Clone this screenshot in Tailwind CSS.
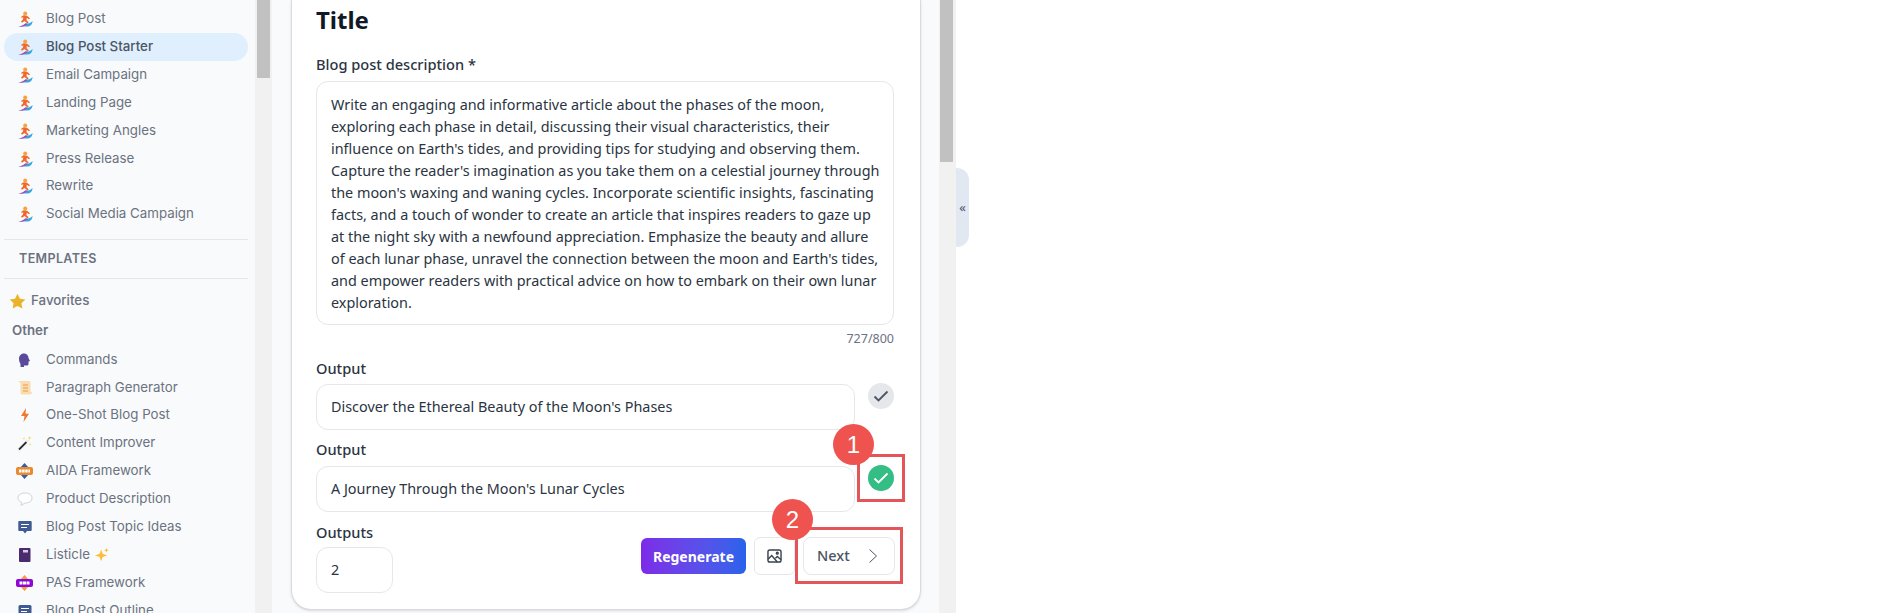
<!doctype html>
<html>
<head>
<meta charset="UTF-8">
<script src="https://cdn.jsdelivr.net/npm/@tailwindcss/browser@4"></script>
<title>Blog Post Starter</title>
</head>
<body class="bg-white overflow-hidden">
<svg class="hidden">
  <symbol id="surfer" viewBox="0 0 16 16">
    <path d="M1.500 15.500c3.500-.3 5.500-1.300 7.500-3 2 .3 4.500-.3 6.500-2.500 0 3.500-2 5.500-6 5.500z" fill="#39a6e0"/>
    <path d="M1 15.700c3-.4 5.500-1.500 7.500-3.400l2 .6c-2 2-5 3-9.500 2.800z" fill="#a84cb8"/>
    <circle cx="8.200" cy="2.400" r="2" fill="#f9a13c"/>
    <path d="M6.500 4.300l3.500.4 3 2.600-1 1-2.200-1.500-.3 2.400 2.200 2-1.200 1.300L7.500 10 5 11.800l-1-1.200 2-2.200.2-2.300-1.200 1-1-1z" fill="#ef6a2a"/>
  </symbol>
</svg>
<div class="flex h-[613px] w-[1887px]">
  <!-- Sidebar -->
  <aside class="w-[255px] shrink-0 bg-[#f9fafb] overflow-hidden font-['Inter',sans-serif] text-[13.3px] text-[#6b7280]">
    <ul class="pl-[4px] pr-[7px] pt-[5px]">
      <li class="flex items-center h-[28px] pl-[13px]"><svg class="w-[16px] h-[16px] mr-[13px]"><use href="#surfer"/></svg>Blog Post</li>
      <li class="flex items-center h-[28px] pl-[13px] rounded-full bg-[#e0effe] font-medium text-[#4b5563]"><svg class="w-[16px] h-[16px] mr-[13px]"><use href="#surfer"/></svg>Blog Post Starter</li>
      <li class="flex items-center h-[28px] pl-[13px]"><svg class="w-[16px] h-[16px] mr-[13px]"><use href="#surfer"/></svg>Email Campaign</li>
      <li class="flex items-center h-[28px] pl-[13px]"><svg class="w-[16px] h-[16px] mr-[13px]"><use href="#surfer"/></svg>Landing Page</li>
      <li class="flex items-center h-[28px] pl-[13px]"><svg class="w-[16px] h-[16px] mr-[13px]"><use href="#surfer"/></svg>Marketing Angles</li>
      <li class="flex items-center h-[27px] pl-[13px]"><svg class="w-[16px] h-[16px] mr-[13px]"><use href="#surfer"/></svg>Press Release</li>
      <li class="flex items-center h-[28px] pl-[13px]"><svg class="w-[16px] h-[16px] mr-[13px]"><use href="#surfer"/></svg>Rewrite</li>
      <li class="flex items-center h-[28px] pl-[13px]"><svg class="w-[16px] h-[16px] mr-[13px]"><use href="#surfer"/></svg>Social Media Campaign</li>
    </ul>
    <div class="mt-[11px] ml-[4px] mr-[7px] h-[40px] border-y border-[#e5e7eb] flex items-center pl-[15px] font-semibold text-[12.5px] tracking-[0.03em] text-[#6b7280]">TEMPLATES</div>
    <div class="flex items-center h-[22px] mt-[11px] pl-[9px] font-medium text-[#6b7280]">
      <svg class="w-[17px] h-[17px] mr-[5px]" viewBox="0 0 24 24"><path d="M12 1l3.400 7 7.600 1.100-5.500 5.300 1.400 7.600L12 18.300 5.100 22l1.400-7.600L1 9.100 8.600 8z" fill="#e9b32a"/></svg>Favorites
    </div>
    <div class="h-[22px] mt-[8px] pl-[12px] flex items-center font-semibold text-[#6b7280]">Other</div>
    <ul class="pl-[4px] pr-[7px] mt-[4px]">
      <li class="flex items-center h-[28px] pl-[13px]"><svg class="w-[16px] h-[16px] mr-[13px]" viewBox="0 0 16 16"><path d="M2 6.500C2 3.500 4.500 1.500 7 1.500s4.500 2 4.500 4.500l1.500 3-1.500.5V12c0 1-1 1.500-2 1.500H7V15H3.500v-3C2.500 10.500 2 8.500 2 6.500z" fill="#5b4a9c"/></svg>Commands</li>
      <li class="flex items-center h-[27px] pl-[13px]"><svg class="w-[16px] h-[16px] mr-[13px]" viewBox="0 0 16 16"><path d="M1 1h11c1 0 1.500 1 1.500 2v9H15c0 1.500-1 2.500-2 2.500H5c-1 0-1.500-1-1.500-2V3C3.500 2 2 2 1 1z" fill="#fbdcae"/><path d="M6 5h5M6 8h5M6 11h5" stroke="#e59a4c"/></svg>Paragraph Generator</li>
      <li class="flex items-center h-[28px] pl-[13px]"><svg class="w-[16px] h-[16px] mr-[13px]" viewBox="0 0 16 16"><path d="M9 1L4 9h3.500L6.500 15 12 6.800H8.500z" fill="#f4762d"/></svg>One-Shot Blog Post</li>
      <li class="flex items-center h-[28px] pl-[13px]"><svg class="w-[16px] h-[16px] mr-[13px]" viewBox="0 0 16 16"><path d="M2 14.500L9.500 7" stroke="#292f33" stroke-width="1.800"/><path d="M9.500 7l2-2" stroke="#e8e8e8" stroke-width="1.800"/><path d="M12.500 1l.6 1.500 1.500.5-1.500.6-.6 1.400-.5-1.400-1.500-.6 1.500-.5zM7 2l.4 1 1 .4-1 .4L7 4.800 6.600 3.800l-1-.4 1-.4zM13 8l.4 1 1 .4-1 .4-.4 1-.4-1-1-.4 1-.4z" fill="#f8d566"/></svg>Content Improver</li>
      <li class="flex items-center h-[28px] pl-[12px]"><svg class="w-[17px] h-[16px] mr-[13px]" viewBox="0 0 17 16"><path d="M8.500 0l4.500 5H4z M4 11h9l-4.500 5z" fill="#3b5ba5"/><rect y="4" width="17" height="8" rx="2" fill="#ea8a2f"/><path d="M3 8h11" stroke="#fff" stroke-width="3" stroke-dasharray="2.500 .6"/></svg>AIDA Framework</li>
      <li class="flex items-center h-[28px] pl-[13px]"><svg class="w-[16px] h-[16px] mr-[13px]" viewBox="0 0 16 16"><path d="M8 2c4 0 7 1.800 7 5s-3 5-7 5l-4 2.500 1-3C2.500 10.500 1 9 1 7c0-3.200 3-5 7-5z" fill="#fff" stroke="#ccd6dd"/></svg>Product Description</li>
      <li class="flex items-center h-[28px] pl-[13px]"><svg class="w-[16px] h-[16px] mr-[13px]" viewBox="0 0 16 16"><path d="M2.500 2h11c.8 0 1.200.5 1.200 1.200v7.500c0 .8-.5 1.300-1.200 1.300H10l-2 2.500L6 12H2.500c-.8 0-1.200-.5-1.200-1.300V3.200C1.300 2.500 1.700 2 2.500 2z" fill="#3f5b94"/><path d="M4 5.500h8M4 8.500h6" stroke="#fff" stroke-width="1.200"/></svg>Blog Post Topic Ideas</li>
      <li class="flex items-center h-[28px] pl-[13px]"><svg class="w-[16px] h-[16px] mr-[13px]" viewBox="0 0 16 16"><rect x="2" y="1" width="11.500" height="14" rx="1" fill="#4a2c6e"/><rect x="6" y="3" width="5" height="2.500" fill="#d8c9e6"/></svg>Listicle <svg class="ml-[5px] w-[14px] h-[14px]" viewBox="0 0 16 16"><path d="M7 2l1.800 4.700L14 8.500l-5.200 1.800L7 15l-1.800-4.700L0 8.500l5.200-1.800zM13 0l.8 1.700 1.700.8-1.700.8-.8 1.700-.8-1.700-1.700-.8 1.700-.8z" fill="#fbbf3c"/></svg></li>
      <li class="flex items-center h-[28px] pl-[12px]"><svg class="w-[17px] h-[16px] mr-[13px]" viewBox="0 0 17 16"><path d="M8.500 0l4.500 5H4z M4 11h9l-4.500 5z" fill="#f59e3c"/><rect y="4" width="17" height="8" rx="2" fill="#8f06d6"/><path d="M3.500 8h10" stroke="#fff" stroke-width="3" stroke-dasharray="3 .5"/></svg>PAS Framework</li>
      <li class="flex items-center h-[28px] pl-[13px]"><svg class="w-[16px] h-[16px] mr-[13px]" viewBox="0 0 16 16"><rect x="1.500" y="2" width="13" height="13" rx="1.500" fill="#3f5b94"/><path d="M4 5.500h8M4 8.500h6" stroke="#fff" stroke-width="1.200"/></svg>Blog Post Outline</li>
    </ul>
  </aside>
  <!-- Sidebar scrollbar -->
  <div class="w-[17px] shrink-0 bg-[#f1f1f1] pl-[2px]"><div class="w-[13px] h-[78px] bg-[#c1c1c1]"></div></div>
  <!-- Main -->
  <main class="relative w-[667px] shrink-0 bg-[#f9fafb] pl-[19px] font-['Noto_Sans',sans-serif] overflow-hidden">
    <section class="w-[630px] h-[610px] bg-white rounded-b-[20px] border-x border-b border-[#d9dbde] shadow-sm pl-[24px]">
      <h1 class="pt-[2px] h-[40px] text-[24px] leading-[36px] font-bold text-[#111827]">Title</h1>
      <label class="block mt-[14px] text-[14.6px] leading-[20px] font-medium text-[#2b3442]">Blog post description *</label>
      <div class="mt-[7px] w-[578px] h-[244px] border border-[#e5e7eb] rounded-xl pl-[14px] pt-[12px] text-[14.4px] leading-[22px] whitespace-nowrap text-[#2b3442]">Write an engaging and informative article about the phases of the moon,<br>exploring each phase in detail, discussing their visual characteristics, their<br>influence on Earth's tides, and providing tips for studying and observing them.<br>Capture the reader's imagination as you take them on a celestial journey through<br>the moon's waxing and waning cycles. Incorporate scientific insights, fascinating<br>facts, and a touch of wonder to create an article that inspires readers to gaze up<br>at the night sky with a newfound appreciation. Emphasize the beauty and allure<br>of each lunar phase, unravel the connection between the moon and Earth's tides,<br>and empower readers with practical advice on how to embark on their own lunar<br>exploration.</div>
      <div class="mt-[6px] w-[578px] text-right text-[12.5px] leading-[16px] text-[#6b7280]">727/800</div>
      <div class="mt-[11px] text-[14.6px] leading-[20px] font-medium text-[#2b3442]">Output</div>
      <div class="mt-[6px] flex items-start">
        <div class="w-[539px] h-[46px] border border-[#e5e7eb] rounded-xl pl-[14px] flex items-center text-[14.4px] text-[#2b3442]">Discover the Ethereal Beauty of the Moon's Phases</div>
        <div class="ml-[13px] mt-[-1px] w-[26px] h-[26px] rounded-full bg-[#e5e7eb] flex items-center justify-center"><svg class="w-[16px] h-[16px]" viewBox="0 0 16 16" fill="none" stroke="#4b5563" stroke-width="1.800"><path d="M1.500 8.500l4 4 9-9"/></svg></div>
      </div>
      <div class="mt-[9px] text-[14.6px] leading-[20px] font-medium text-[#2b3442]">Output</div>
      <div class="mt-[7px] flex items-start">
        <div class="w-[539px] h-[46px] border border-[#e5e7eb] rounded-xl pl-[14px] flex items-center text-[14.4px] text-[#2b3442]">A Journey Through the Moon's Lunar Cycles</div>
        <div class="ml-[13px] mt-[-1px] w-[26px] h-[26px] rounded-full bg-[#34bd85] flex items-center justify-center"><svg class="w-[16px] h-[16px]" viewBox="0 0 16 16" fill="none" stroke="#fff" stroke-width="1.800"><path d="M1.500 8.500l4 4 9-9"/></svg></div>
      </div>
      <div class="mt-[10px] w-[579px] flex items-start">
        <div>
          <div class="text-[14.6px] leading-[20px] font-medium text-[#2b3442]">Outputs</div>
          <div class="mt-[5px] w-[77px] h-[46px] border border-[#e5e7eb] rounded-xl pl-[14px] flex items-center text-[14.4px] text-[#2b3442]">2</div>
        </div>
        <div class="ml-auto mt-[15px] flex items-center">
          <div class="w-[105px] h-[36px] rounded-md bg-linear-to-r from-[#7c2ae8] to-[#2563eb] text-white text-[14px] font-bold flex items-center justify-center">Regenerate</div>
          <div class="ml-[8px] w-[41px] h-[38px] border border-[#e5e7eb] rounded-md flex items-center justify-center"><svg class="w-[15px] h-[14px]" viewBox="0 0 16 15" fill="none" stroke="#374151" stroke-width="1.500"><rect x="1" y="1" width="14" height="13" rx="2"/><path d="M1 11l4-4 6 7M9 10l2-2 4 3.500"/><circle cx="11" cy="4.500" r="1"/></svg></div>
          <div class="ml-[8px] w-[92px] h-[38px] border border-[#e5e7eb] rounded-lg flex items-center pl-[13px] text-[14.5px] font-medium text-[#4b5563]">Next<svg class="ml-[19px] w-[8px] h-[14px]" viewBox="0 0 8 14" fill="none" stroke="#4b5563" stroke-width="1"><path d="M.5.500l7 6.500-7 6.500"/></svg></div>
        </div>
      </div>
    </section>
    <!-- Popup edge above the title -->
    <div class="absolute left-[160px] top-[-9px] w-[347px] h-[11px] bg-white rounded-b-lg shadow-xl"></div>
    <!-- Annotations -->
    <div class="absolute left-[585px] top-[454px] w-[48px] h-[48px] border-[3px] border-[#e25558]"></div>
    <div class="absolute left-[523px] top-[527px] w-[108px] h-[57px] border-[3px] border-[#e25558]"></div>
    <div class="absolute left-[561px] top-[424px] w-[41px] h-[41px] rounded-full bg-[#ef5350] text-white text-[24px] flex items-center justify-center font-['Liberation_Sans']">1</div>
    <div class="absolute left-[500px] top-[499px] w-[41px] h-[41px] rounded-full bg-[#ef5350] text-white text-[24px] flex items-center justify-center font-['Liberation_Sans']">2</div>
  </main>
  <!-- Main scrollbar -->
  <div class="w-[17px] shrink-0 bg-[#f1f1f1] pl-[1px]"><div class="w-[13px] h-[162px] bg-[#c1c1c1]"></div></div>
  <div class="relative flex-1 bg-white">
    <div class="absolute left-0 top-[168px] w-[13px] h-[79px] rounded-r-xl bg-[#e2e8f2] flex items-center justify-center text-[13px] text-[#475569]">«</div>
  </div>
</div>
</body>
</html>
